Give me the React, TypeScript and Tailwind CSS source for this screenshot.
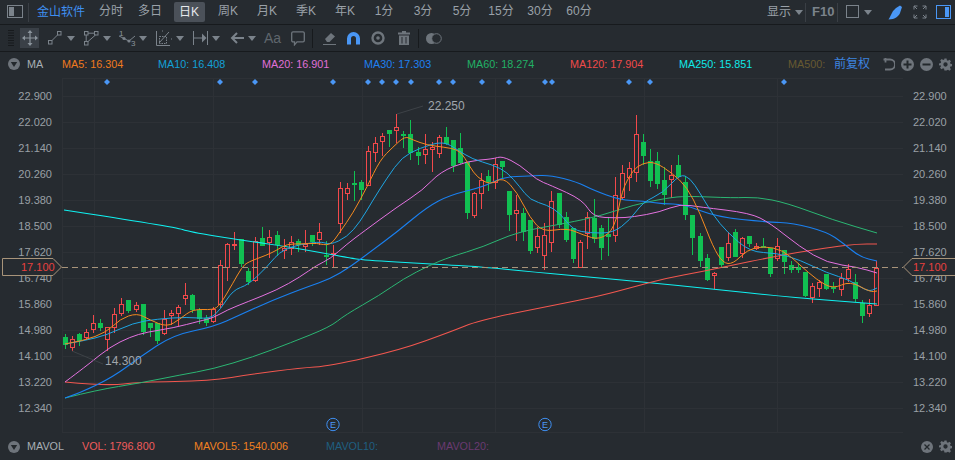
import React from 'react';

const FONT = "font-['Liberation_Sans','Noto_Sans_CJK_SC',sans-serif]";

// body top, body bottom, wick top, wick bottom, up (hollow red) or down (solid green)
const CANDLES: [number, number, number, number, boolean][] = [
  [337, 345, 334, 349, false], [339, 347, 336, 351, true], [334, 341, 333, 346, false], [332, 337, 329, 340, true],
  [323, 329, 315, 333, true], [323, 328, 319, 331, false], [327, 339, 327, 351, true], [314, 327, 308, 333, true],
  [304, 313, 298, 316, true], [300, 311, 300, 313, false], [305, 309, 302, 312, true], [304, 332, 304, 335, false],
  [323, 328, 323, 337, false], [323, 341, 323, 344, false], [319, 333, 310, 335, true], [313, 315, 310, 325, true],
  [307, 313, 305, 326, true], [295, 298, 283, 305, true], [295, 310, 294, 313, false], [310, 319, 308, 324, false],
  [318, 323, 315, 326, false], [309, 321, 307, 323, true], [265, 304, 260, 308, true], [244, 267, 243, 281, true],
  [244, 245, 232, 250, true], [239, 264, 239, 267, false], [271, 282, 268, 285, false], [241, 280, 237, 282, true],
  [238, 246, 227, 246, false], [237, 242, 230, 258, true], [235, 245, 231, 256, false], [248, 250, 239, 259, true],
  [242, 248, 236, 255, true], [241, 245, 239, 252, false], [244, 246, 230, 252, true], [235, 242, 235, 246, false],
  [232, 239, 223, 245, true], [255, 257, 241, 265, false], [253, 254, 245, 267, true], [188, 223, 182, 233, true],
  [188, 193, 183, 200, true], [183, 185, 171, 201, false], [182, 190, 180, 200, false], [151, 185, 146, 185, true],
  [143, 152, 137, 162, true], [136, 141, 133, 156, true], [130, 134, 130, 147, false], [127, 130, 114, 143, true],
  [134, 136, 131, 148, false], [134, 153, 120, 160, false], [152, 156, 147, 165, false], [149, 154, 134, 164, true],
  [147, 149, 142, 172, true], [137, 153, 135, 158, true], [137, 144, 127, 145, false], [140, 166, 140, 172, false],
  [148, 163, 133, 164, false], [162, 213, 162, 219, false], [193, 215, 192, 218, true], [180, 193, 173, 209, true],
  [176, 182, 170, 191, false], [164, 182, 158, 189, true], [161, 167, 161, 178, false], [191, 215, 191, 231, false],
  [210, 213, 195, 241, true], [213, 232, 208, 241, false], [220, 251, 220, 254, false], [236, 247, 227, 253, true],
  [235, 255, 223, 270, true], [201, 242, 191, 252, true], [193, 225, 193, 228, false], [217, 240, 212, 242, false],
  [228, 259, 228, 263, false], [242, 267, 240, 267, true], [217, 233, 212, 249, true], [218, 239, 199, 243, false],
  [228, 248, 225, 260, false], [234, 237, 217, 256, false], [195, 235, 177, 242, true], [173, 197, 165, 200, true],
  [168, 177, 162, 191, true], [134, 172, 115, 182, true], [142, 156, 134, 165, false], [161, 181, 149, 187, false],
  [161, 184, 152, 189, false], [180, 195, 167, 205, false], [175, 179, 165, 198, true], [165, 177, 155, 178, false],
  [182, 215, 176, 220, false], [215, 238, 215, 255, false], [236, 261, 233, 267, false], [258, 280, 254, 281, false],
  [273, 275, 272, 289, true], [247, 265, 247, 268, false], [243, 257, 232, 261, true], [232, 257, 229, 257, false],
  [238, 253, 237, 258, true], [236, 244, 236, 247, false], [246, 248, 243, 250, true], [246, 247, 238, 248, false],
  [248, 274, 248, 277, false], [246, 258, 238, 261, true], [250, 262, 250, 274, false], [265, 270, 261, 273, false],
  [267, 270, 263, 273, false], [272, 296, 272, 297, false], [286, 297, 283, 303, true], [282, 288, 280, 297, true],
  [274, 289, 274, 290, false], [287, 289, 282, 293, false], [278, 289, 273, 296, true], [269, 278, 264, 282, true],
  [282, 299, 274, 302, false], [303, 316, 300, 323, false], [305, 313, 299, 317, true], [268, 305, 261, 305, true],
];

const LINES: { color: string; width: number; pts: string }[] = [
  { color: '#10f0f0', width: 1.15, pts: '64,210 175,227 190,232 240,240 290,247 350,258 363,260 430,264 450,265 483,267 533,272 600,278 643,282 713,289 787,297 877,304' },
  { color: '#f2574f', width: 1.1, pts: '65,382 107,386 140,382 210,381 253,374 300,368 330,366 400,350 450,332 480,320 550,306 600,296 633,287 667,278 700,272 733,265 767,258 800,252 833,247 857,244 877,244' },
  { color: '#2bb673', width: 1, pts: '65,398 97,390 140,383 180,375 213,369 253,357 290,343 330,327 345,315 380,295 403,279 430,265 450,257 483,247 517,232 567,223 600,216 633,205 667,198 687,196 733,198 757,197 787,203 833,220 877,233' },
  { color: '#1a80f0', width: 1.1, pts: '65,398 80,393 113,377 140,357 173,335 213,327 240,315 273,300 307,287 330,279 350,267 370,252 397,232 427,207 450,195 483,187 503,177 530,176 550,175 577,182 593,190 620,200 643,201 663,204 683,204 717,217 767,222 793,223 827,232 843,243 860,257 877,261' },
  { color: '#e472e0', width: 1, pts: '65,382 77,373 90,363 110,347 130,337 147,332 173,328 200,321 213,318 227,310 247,302 277,290 300,277 317,265 330,259 347,244 363,232 397,207 423,190 440,172 467,161 493,159 502,156 520,165 537,180 550,185 583,200 593,217 617,218 633,217 660,212 680,204 700,207 750,213 770,223 800,247 827,263 857,267 877,273' },
  { color: '#1ea6e4', width: 1, pts: '65,344 83,341 107,335 133,323 157,319 187,317 210,319 220,310 233,290 248,285 267,267 283,248 320,241 330,245 347,237 360,222 373,200 387,178 402,157 420,148 443,141 458,150 472,159 493,165 507,172 520,187 530,200 547,205 560,213 573,230 590,233 613,233 630,220 643,202 663,193 680,174 690,178 700,193 713,215 727,232 750,252 777,253 800,260 827,273 850,280 868,292 877,288' },
  { color: '#f58a1f', width: 1, pts: '65,344 83,341 107,332 120,319 137,313 150,320 167,327 180,319 193,309 213,310 220,305 233,283 242,267 248,262 267,255 277,250 287,244 300,244 317,243 330,246 340,232 353,213 367,187 380,160 393,147 405,136 413,140 427,145 443,147 460,150 470,167 477,177 490,185 503,177 517,192 530,218 543,232 567,228 583,235 600,240 615,228 622,190 633,170 643,163 655,162 672,173 687,187 700,213 713,247 723,263 733,264 747,250 763,246 783,250 800,265 817,280 833,289 850,281 870,292 877,291' },
];

// rounds the corners of a polyline through the midpoints of its segments
const smooth = (pts: string) => {
  const p = pts.split(' ').map(s => s.split(',').map(Number));
  let d = `M${p[0][0]} ${p[0][1]}`;
  for (let i = 1; i < p.length - 1; i++) {
    d += `Q${p[i][0]} ${p[i][1]} ${(p[i][0] + p[i + 1][0]) / 2} ${(p[i][1] + p[i + 1][1]) / 2}`;
  }
  const last = p[p.length - 1];
  return `${d}L${last[0]} ${last[1]}`;
};

const DIAMONDS = [107, 220, 255, 333, 368, 382, 396, 411, 439, 453, 482, 509, 545, 552, 629, 650, 784];
const V_GRID = [94, 213, 362, 495, 644, 777];
const TICKS = ['22.900', '22.020', '21.140', '20.260', '19.380', '18.500', '17.620', '16.740', '15.860', '14.980', '14.100', '13.220', '12.340'];
const TABS = ['分时', '多日', '日K', '周K', '月K', '季K', '年K', '1分', '3分', '5分', '15分', '30分', '60分'];

const Caret = ({ className = '' }: { className?: string }) => (
  <svg width="8" height="5" viewBox="0 0 8 5" className={className}><path d="M0 0H8L4 5Z" fill="#7b838b" /></svg>
);

const CircleCaret = ({ className = '' }: { className?: string }) => (
  <svg width="12" height="12" viewBox="0 0 12 12" className={className}>
    <circle cx="6" cy="6" r="6" fill="#6e747b" />
    <path d="M2.8 4H9.2L6 9Z" fill="#23282c" />
  </svg>
);

const Gear = ({ className = '' }: { className?: string }) => (
  <svg width="13" height="13" viewBox="0 0 24 24" className={className} fill="#6e747b">
    <path fillRule="evenodd" d="M10 1h4l.6 3.2 2 .8 2.7-1.8 2.8 2.8-1.8 2.7.8 2 3.2.6v4l-3.2.6-.8 2 1.8 2.7-2.8 2.8-2.7-1.8-2 .8L14 23h-4l-.6-3.2-2-.8-2.7 1.8-2.8-2.8 1.8-2.7-.8-2L0 14v-4l3.2-.6.8-2L2.2 4.7 5 1.9l2.7 1.8 2-.8zM12 8a4 4 0 100 8 4 4 0 000-8z" />
  </svg>
);

const Chart = () => (
  <svg width="841" height="357" viewBox="62 76 841 357" className="block shrink-0">
    <g stroke="#2d3136" strokeWidth="1" shapeRendering="crispEdges">
      {TICKS.map((_, i) => <line key={i} x1="62" x2="903" y1={96 + i * 26 + 0.5} y2={96 + i * 26 + 0.5} />)}
      {V_GRID.map(x => <line key={x} x1={x + 0.5} x2={x + 0.5} y1="78" y2="433" />)}
      <line x1="62" x2="903" y1="78.5" y2="78.5" />
      <line x1="62.5" x2="62.5" y1="78" y2="433" />
      <line x1="903.5" x2="903.5" y1="78" y2="433" />
      <line x1="62" x2="903" y1="432.5" y2="432.5" />
    </g>
    {DIAMONDS.map(x => <path key={x} d={`M${x} 79L${x + 3} 82L${x} 85L${x - 3} 82Z`} fill="#4a97f5" />)}
    {CANDLES.map((c, i) => {
      const x = Math.round(65 + i * 7.05);
      const [top, bot, hi, lo, up] = c;
      const col = up ? '#f2494b' : '#11c052';
      return (
        <g key={i} shapeRendering="crispEdges">
          <line x1={x + 0.5} x2={x + 0.5} y1={hi} y2={lo} stroke={col} />
          {up
            ? <rect x={x - 1.5} y={top + 0.5} width="4" height={Math.max(bot - top, 1)} fill="#262b30" stroke={col} />
            : <rect x={x - 2} y={top} width="5" height={Math.max(bot - top, 2)} fill={col} />}
        </g>
      );
    })}
    {LINES.map(l => <path key={l.color} d={smooth(l.pts)} fill="none" stroke={l.color} strokeWidth={l.width} />)}
    <line x1="62" x2="903" y1="267.5" y2="267.5" stroke="#a8947a" strokeDasharray="6 4" />
    <path d="M397 114L423 106" stroke="#3d4247" />
    <path d="M72 351L103 364" stroke="#3d4247" />
    <text x="428" y="110" fontSize="12" fill="#a0a6ac" fontFamily="Liberation Sans">22.250</text>
    <text x="105" y="365" fontSize="12" fill="#a0a6ac" fontFamily="Liberation Sans">14.300</text>
    {[333, 545].map(x => (
      <g key={x}>
        <circle cx={x} cy="424.5" r="6.2" fill="none" stroke="#3f8ff0" />
        <text x={x} y="428" fontSize="9" textAnchor="middle" fill="#4a97f5" fontFamily="Liberation Sans">E</text>
      </g>
    ))}
  </svg>
);

const AxisLabels = ({ className }: { className: string }) => (
  <div className={`flex flex-col pt-[7px] text-[11px] text-[#9aa0a6] ${className}`}>
    {TICKS.map(t => <div key={t} className="h-[26px] leading-[26px]">{t}</div>)}
  </div>
);

export default function App() {
  return (
    <div className={`relative w-[955px] h-[460px] flex flex-col overflow-hidden bg-[#262b30] ${FONT}`}>
      {/* period tabs */}
      <div className="h-[25px] shrink-0 flex items-center border-b border-[#171a1d] text-[12px] text-[#9aa1a8] whitespace-nowrap">
        <svg width="17" height="14" viewBox="0 0 17 14" className="ml-[7px] shrink-0">
          <rect x="0.5" y="0.5" width="15" height="12" fill="none" stroke="#7b838b" />
          <rect x="2" y="2" width="5" height="9" fill="#7b838b" />
        </svg>
        <div className="ml-[4px] w-px h-[19px] bg-[#3a3f45]" />
        <span className="ml-[8px] w-[48px] shrink-0 text-[#3f8ff0]">金山软件</span>
        <div className="ml-[6.5px] flex shrink-0">
          {TABS.map(t => (
            <div key={t} className="w-[39px] flex justify-center">
              <span className={t === '日K' ? 'h-[20px] w-[31px] flex items-center justify-center rounded-[2px] bg-[#4b5159] text-[#e6e9ec]' : ''}>{t}</span>
            </div>
          ))}
        </div>
        <span className="ml-[168.5px]">显示</span>
        <Caret className="ml-[4px]" />
        <div className="ml-[2px] w-px h-[19px] bg-[#3a3f45]" />
        <span className="ml-[6px] text-[13px] font-bold text-[#7b838b]">F10</span>
        <div className="ml-[3px] w-px h-[19px] bg-[#3a3f45]" />
        <svg width="14" height="14" viewBox="0 0 14 14" className="ml-[8px]"><rect x="0.5" y="0.5" width="12" height="12" fill="none" stroke="#7b838b" /></svg>
        <Caret className="ml-[4px]" />
        <svg width="14" height="15" viewBox="0 0 14 15" className="ml-[16px]">
          <path d="M8 3L12 .5L14 2L12.5 6.5C11.5 11 7 14.5 .5 14.5C2.5 11.5 3.5 8.5 5 6Z" fill="#4a97f5" />
        </svg>
        <svg width="14" height="14" viewBox="0 0 14 14" className="ml-[11px]" fill="none" stroke="#7b838b">
          <path d="M1 4.5V1H4.5M9.5 1H13V4.5M1 9.5V13H4.5M9.5 13H13V9.5M1 1L4 4M13 1L10 4M1 13L4 10M13 13L10 10" />
        </svg>
        <svg width="15" height="14" viewBox="0 0 15 14" className="ml-[9px] mr-[3px] shrink-0">
          <rect x="0.5" y="0.5" width="14" height="13" fill="none" stroke="#4a97f5" />
          <rect x="9" y="2" width="4" height="10" fill="#4a97f5" />
        </svg>
      </div>

      {/* drawing tools */}
      <div className="h-[27px] shrink-0 flex items-center border-b border-[#171a1d]">
        <svg width="6" height="17" viewBox="0 0 6 17" className="ml-[8px]">
          {[0, 2.5, 5, 7.5, 10, 12.5, 15].map(y => <rect key={y} y={y} width="6" height="1" fill="#171a1d" />)}
        </svg>
        <div className="ml-[6px] w-[19px] h-[20px] flex items-center justify-center bg-[#3a4047]">
          <svg width="16" height="16" viewBox="0 0 16 16">
            <path d="M8 2V14M2 8H14" stroke="#8b949c" strokeWidth="1.2" />
            <path d="M8 0L10.5 3H5.5ZM8 16L5.5 13H10.5ZM0 8L3 5.5V10.5ZM16 8L13 10.5V5.5Z" fill="#8b949c" />
          </svg>
        </div>
        <svg width="14" height="14" viewBox="0 0 14 14" className="ml-[9px]" fill="none" stroke="#7b838b">
          <rect x="0.5" y="9.5" width="3.5" height="3.5" />
          <rect x="9.5" y="0.5" width="3.5" height="3.5" />
          <path d="M4 9.5L9.5 4" />
        </svg>
        <Caret className="ml-[5px]" />
        <svg width="15" height="15" viewBox="0 0 15 15" className="ml-[9px]" fill="none" stroke="#7b838b">
          <rect x="0.5" y="0.5" width="3.5" height="3.5" />
          <rect x="10.5" y="0.5" width="3.5" height="3.5" />
          <rect x="0.5" y="10.5" width="3.5" height="3.5" />
          <path d="M4 2.2H10.5M2.2 4V10.5M4 10.5L11.5 4" />
        </svg>
        <Caret className="ml-[4px]" />
        <svg width="17" height="18" viewBox="0 0 17 18" className="ml-[8px]">
          <text x="0" y="7" fontSize="8" fill="#8b949c" fontFamily="Liberation Sans">1</text>
          <text x="12" y="17" fontSize="8" fill="#8b949c" fontFamily="Liberation Sans">3</text>
          <path d="M0 7L5 9.5L10 12L16 7" fill="none" stroke="#7b838b" />
          <circle cx="5" cy="9.5" r="1.6" fill="#7b838b" />
          <circle cx="10" cy="12" r="1.6" fill="#7b838b" />
        </svg>
        <Caret className="ml-[3px]" />
        <svg width="17" height="16" viewBox="0 0 17 16" className="ml-[9px]" fill="none" stroke="#7b838b">
          <path d="M0.5 1V15.5H14" />
          <path d="M3 13L13 2" />
          <rect x="3.5" y="6.5" width="7" height="7" strokeDasharray="1.5 1" />
          <path d="M6 1H7M15 9H16" />
        </svg>
        <Caret className="ml-[3px]" />
        <svg width="15" height="14" viewBox="0 0 15 14" className="ml-[9px]" fill="none" stroke="#7b838b">
          <path d="M0.5 0V14M14.5 0V14M0.5 7H10" />
          <path d="M9 2.5L13.5 7L9 11.5Z" fill="#7b838b" stroke="none" />
        </svg>
        <Caret className="ml-[4px]" />
        <svg width="14" height="12" viewBox="0 0 14 12" className="ml-[10px]" fill="none" stroke="#7b838b" strokeWidth="2">
          <path d="M14 6H2M7 1L2 6L7 11" />
        </svg>
        <Caret className="ml-[4px]" />
        <span className="ml-[8px] w-[16px] text-[14px] leading-none text-[#5f666d]">Aa</span>
        <svg width="14" height="15" viewBox="0 0 14 15" className="ml-[11px]" fill="none" stroke="#6e757c" strokeWidth="1.3">
          <path d="M2 .8H12A1.3 1.3 0 0113.3 2V9.5A1.3 1.3 0 0112 10.8H6L3.5 13.8V10.8H2A1.3 1.3 0 01.7 9.5V2A1.3 1.3 0 012 .8Z" />
        </svg>
        <div className="ml-[7px] w-px h-[19px] bg-[#171a1d]" />
        <svg width="13" height="13" viewBox="0 0 13 13" className="ml-[10px]" fill="#6e757c">
          <path d="M2 7L8 1L12 4.5L6.5 10H4Z" />
          <rect y="12" width="13" height="1" />
        </svg>
        <svg width="13" height="13" viewBox="0 0 13 13" className="ml-[11px]">
          <path d="M0 12.5V6.5A6.5 6.5 0 0113 6.5V12.5H9V6.5A2.5 2.5 0 004 6.5V12.5Z" fill="#4a97f5" />
        </svg>
        <svg width="14" height="14" viewBox="0 0 14 14" className="ml-[11px]" fill="none">
          <circle cx="7" cy="7" r="5.5" stroke="#6e757c" strokeWidth="2.4" />
          <circle cx="7" cy="7" r="1.8" fill="#6e757c" />
        </svg>
        <svg width="12" height="14" viewBox="0 0 12 14" className="ml-[13px]" fill="#6e757c">
          <path d="M4 0H8V1.5H12V3.5H0V1.5H4ZM1 4.5H11V14H1ZM3.5 6V12.5H4.5V6ZM7.5 6V12.5H8.5V6Z" fillRule="evenodd" />
        </svg>
        <div className="ml-[8px] w-px h-[19px] bg-[#171a1d]" />
        <svg width="16" height="11" viewBox="0 0 16 11" className="ml-[7px]">
          <circle cx="5.5" cy="5.5" r="5.5" fill="#6e757c" />
          <circle cx="10.5" cy="5.5" r="4.8" fill="#262b30" stroke="#6e757c" />
        </svg>
      </div>

      {/* MA legend */}
      <div className="h-[24px] shrink-0 flex items-center text-[10.8px] whitespace-nowrap">
        <CircleCaret className="ml-[8px]" />
        <span className="ml-[7px] w-[35px] text-[#a9afb5]">MA</span>
        <span className="w-[96px] text-[#f07a1e]">MA5: 16.304</span>
        <span className="w-[104px] text-[#12a0d8]">MA10: 16.408</span>
        <span className="w-[102px] text-[#e070d8]">MA20: 16.901</span>
        <span className="w-[103px] text-[#1e80f0]">MA30: 17.303</span>
        <span className="w-[103px] text-[#22b066]">MA60: 18.274</span>
        <span className="w-[109px] text-[#f04a4a]">MA120: 17.904</span>
        <span className="w-[109px] text-[#10e8e8]">MA250: 15.851</span>
        <span className="w-[46px] text-[#665a30]">MA500:</span>
        <span className="w-[48px] text-[12px] text-[#3d85e0]">前复权</span>
        <svg width="13" height="13" viewBox="0 0 13 13" fill="none" stroke="#6e747b" strokeWidth="1.8">
          <path d="M1.5 1.5H8A4.5 4.5 0 018 11.5H3M3.5 0V4.5" />
        </svg>
        <svg width="13" height="13" viewBox="0 0 13 13" className="ml-[6px]">
          <circle cx="6.5" cy="6.5" r="6.5" fill="#6e747b" />
          <path d="M2.5 5.5H5.5V2.5H7.5V5.5H10.5V7.5H7.5V10.5H5.5V7.5H2.5Z" fill="#23282c" />
        </svg>
        <svg width="13" height="13" viewBox="0 0 13 13" className="ml-[6px]">
          <circle cx="6.5" cy="6.5" r="6.5" fill="#6e747b" />
          <rect x="2.5" y="5.5" width="8" height="2" fill="#23282c" />
        </svg>
        <Gear className="ml-[6px]" />
      </div>

      {/* price chart */}
      <div className="relative h-[357px] shrink-0 flex">
        <AxisLabels className="w-[62px] shrink-0 items-end pr-[10px]" />
        <Chart />
        <AxisLabels className="flex-1 pl-[10px]" />
        <div className="absolute left-[2px] top-[182px] w-[60px] h-[18px]">
          <svg width="60" height="18" viewBox="0 0 60 18" className="block">
            <path d="M.5 .5H51L59.5 9L51 17.5H.5Z" fill="#262b30" stroke="#a8947a" />
          </svg>
          <span className="absolute left-[19px] top-0 leading-[18px] text-[11px] text-[#e8403f]">17.100</span>
        </div>
        <div className="absolute left-[903px] top-[182px] w-[52px] h-[18px]">
          <svg width="52" height="18" viewBox="0 0 52 18" className="block">
            <path d="M52 .5H9L.5 9L9 17.5H52" fill="#262b30" stroke="#a8947a" />
          </svg>
          <span className="absolute left-[10px] top-0 leading-[18px] text-[11px] text-[#e8403f]">17.100</span>
        </div>
      </div>

      {/* volume legend */}
      <div className="h-[27px] shrink-0 flex items-center text-[10.8px] whitespace-nowrap">
        <CircleCaret className="ml-[8px]" />
        <span className="ml-[7px] w-[55px] text-[#a9afb5]">MAVOL</span>
        <span className="w-[112px] text-[#f05c5c]">VOL: 1796.800</span>
        <span className="w-[132px] text-[#f08020]">MAVOL5: 1540.006</span>
        <span className="w-[111px] text-[#1f5f80]">MAVOL10:</span>
        <span className="text-[#6a3a70]">MAVOL20:</span>
        <svg width="12" height="12" viewBox="0 0 12 12" className="ml-auto">
          <circle cx="6" cy="6" r="6" fill="#6e747b" />
          <path d="M3.5 3.5L8.5 8.5M8.5 3.5L3.5 8.5" stroke="#23282c" strokeWidth="1.3" />
        </svg>
        <Gear className="ml-[6px] mr-[3px]" />
      </div>
    </div>
  );
}
